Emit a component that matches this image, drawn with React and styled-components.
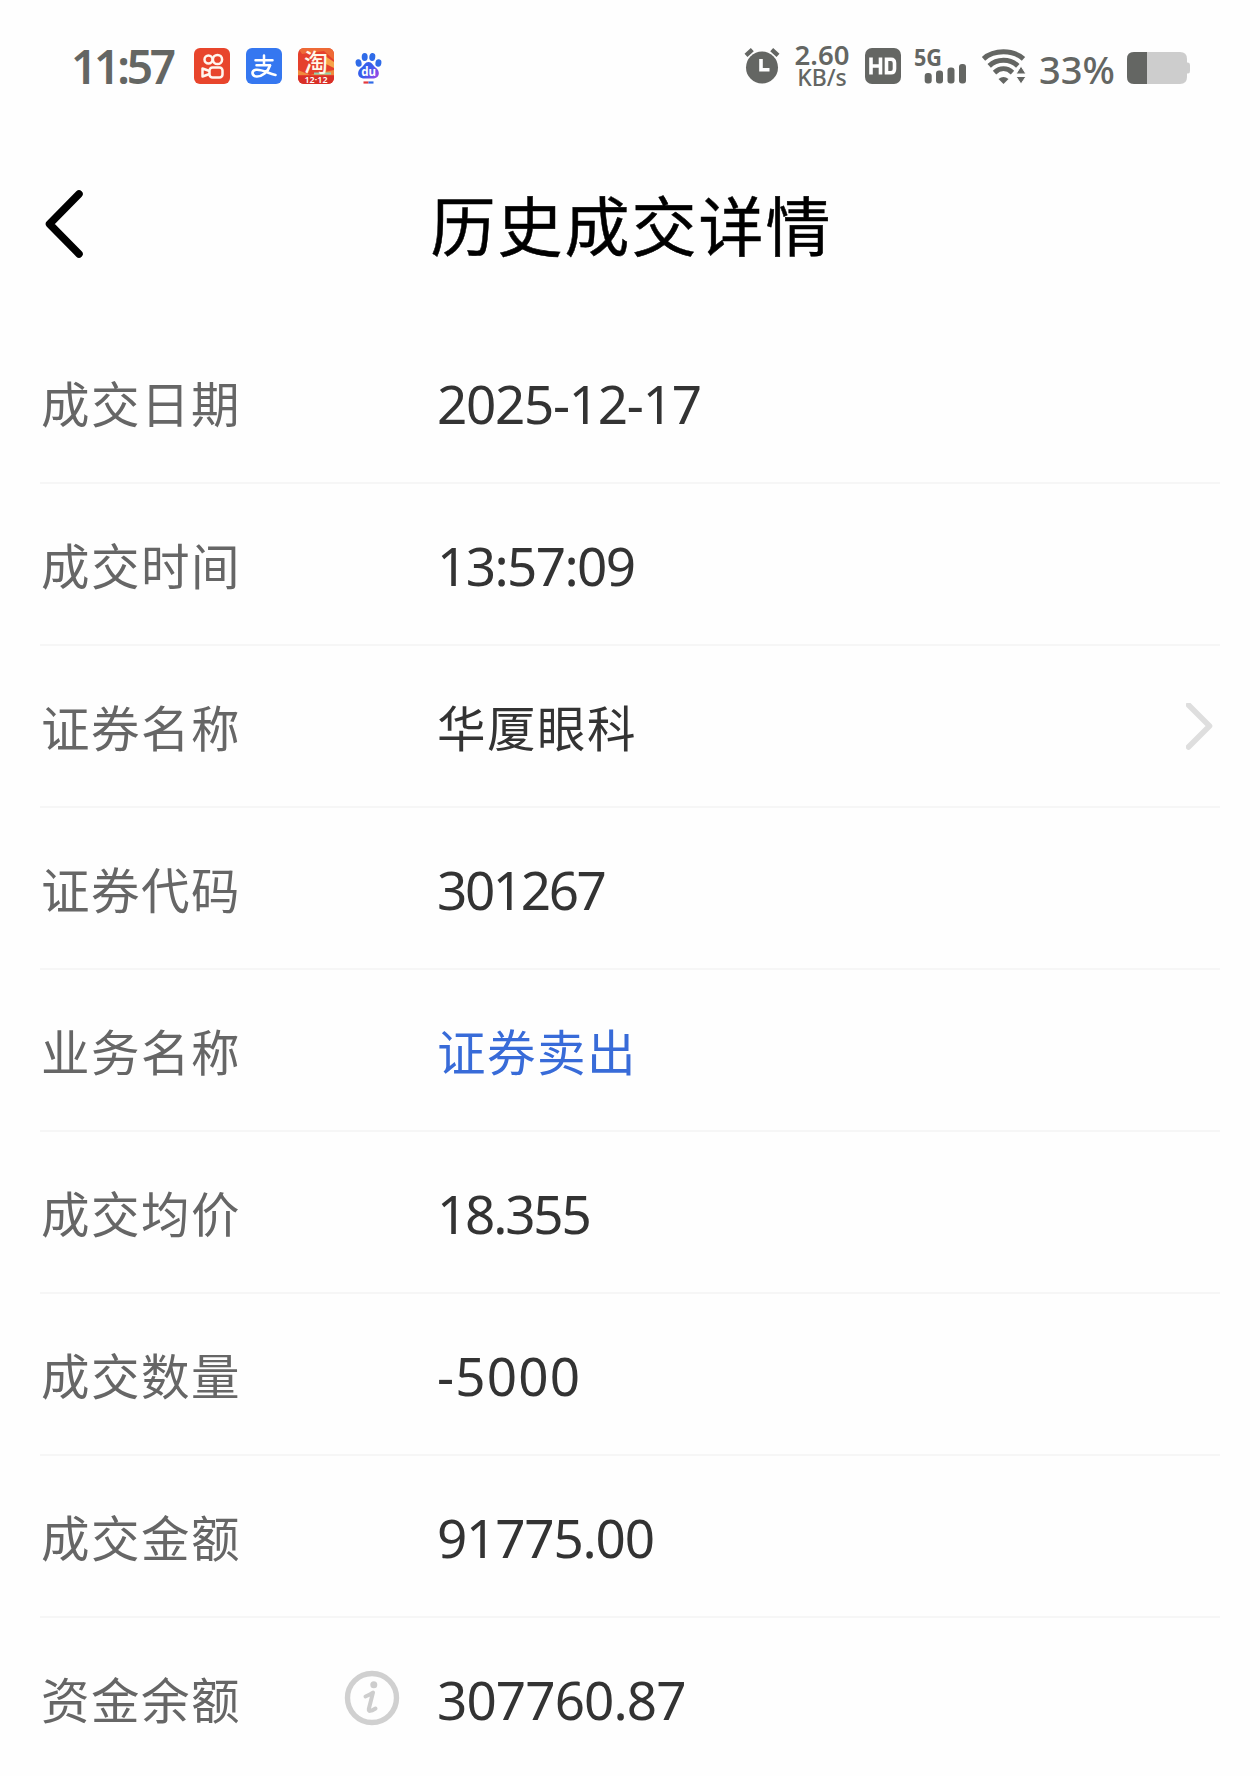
import React from 'react';
import styled, { createGlobalStyle } from 'styled-components';

const GlobalStyle = createGlobalStyle`
  * {
    box-sizing: border-box;
  }

  body {
    margin: 0;
    background-color: #fefefe;
    font-family: 'Noto Sans', 'Noto Sans CJK SC', sans-serif;
  }
`;

const Page = styled.div`
  width: 1260px;
  height: 1776px;
  overflow: hidden;
  background-color: #fefefe;
`;

const StatusBar = styled.div`
  display: flex;
  justify-content: space-between;
  height: 132px;
  padding: 33px 70px 0 71px;
  color: #646663;
`;

const StatusGroup = styled.div`
  display: flex;
  align-items: center;
  height: 66px;
`;

const Clock = styled.span`
  width: 123px;
  font-size: 46px;
  font-weight: 600;
  line-height: 66px;
  letter-spacing: -3.2px;
  white-space: nowrap;
`;

const AppIcon = styled.svg`
  display: block;
  width: 36px;
  height: 36px;
  margin-right: ${(props) => props.$gap || 16}px;
  overflow: visible;
`;

const StatusIcon = styled.svg`
  display: block;
  flex: none;
  margin-left: ${(props) => props.$gap || 0}px;
  overflow: visible;
`;

const Speed = styled.div`
  display: flex;
  flex-direction: column;
  align-items: center;
  width: 56px;
  margin-left: 14px;
  font-weight: 600;
  white-space: nowrap;
`;

const SpeedValue = styled.span`
  font-size: 27.5px;
  line-height: 22px;
`;

const SpeedUnit = styled.span`
  font-size: 23px;
  font-weight: 500;
  line-height: 22px;
`;

const Percent = styled.span`
  width: 76px;
  margin-left: 13px;
  padding-top: 6px;
  font-size: 38px;
  font-weight: 500;
  line-height: 60px;
  white-space: nowrap;
`;

const Header = styled.header`
  display: grid;
  grid-template-columns: 120px 1fr 120px;
  align-items: center;
  height: 190px;
  padding: 0 0 6px;
`;

const BackButton = styled.button`
  display: flex;
  padding: 0 0 0 44px;
  border: none;
  background: none;
`;

const Title = styled.h1`
  margin: 0;
  padding: 0 0 2px 3px;
  font-family: 'Noto Sans CJK SC', sans-serif;
  font-size: 65px;
  font-weight: 400;
  line-height: 90px;
  letter-spacing: 2px;
  text-align: center;
  color: #000;
  -webkit-text-stroke: 0.5px #000;
`;

const List = styled.div`
  padding: 0 40px;
`;

const Row = styled.div`
  display: flex;
  align-items: center;
  height: 162px;
  padding-top: 4px;
  border-bottom: 2px solid #f6f6f6;
`;

const Label = styled.div`
  width: 304px;
  padding: 0 0 4px 1px;
  font-family: 'Noto Sans CJK SC', sans-serif;
  font-size: 48.5px;
  line-height: 70px;
  letter-spacing: 1.5px;
  color: #666;
`;

const InfoSlot = styled.div`
  width: 93px;
`;

const Value = styled.div`
  flex: 1;
  padding-bottom: ${(props) => (props.$chinese ? 4 : 0)}px;
  font-size: ${(props) => (props.$chinese ? 48.5 : 53)}px;
  font-family: ${(props) => (props.$chinese ? "'Noto Sans CJK SC'" : "'Noto Sans'")}, sans-serif;
  line-height: 70px;
  letter-spacing: ${(props) => props.$spacing}px;
  color: ${(props) => (props.$blue ? '#386bd8' : '#333')};
  white-space: nowrap;
`;

const rows = [
  { label: '成交日期', value: '2025-12-17', spacing: -1.3 },
  { label: '成交时间', value: '13:57:09', spacing: -1.6 },
  { label: '证券名称', value: '华厦眼科', spacing: 1.5, chinese: true, arrow: true },
  { label: '证券代码', value: '301267', spacing: -2.4 },
  { label: '业务名称', value: '证券卖出', spacing: 1.5, chinese: true, blue: true },
  { label: '成交均价', value: '18.355', spacing: -2.2 },
  { label: '成交数量', value: '-5000', spacing: 1.2 },
  { label: '成交金额', value: '91775.00', spacing: -1.2 },
  { label: '资金余额', value: '307760.87', spacing: -0.9, info: true },
];

const KuaishouIcon = () => (
  <AppIcon viewBox="0 0 36 36">
    <rect width="36" height="36" rx="6" fill="#e8452c" />
    <g fill="none" stroke="#fff6ee" strokeWidth="2.5">
      <circle cx="14.5" cy="11.5" r="4" />
      <circle cx="23.5" cy="11.5" r="4.6" />
      <rect x="15.5" y="19.5" width="13" height="10" rx="3" />
      <path d="M15.5 23 L8.5 20.5 V28.5 L15.5 26" strokeLinejoin="round" />
    </g>
  </AppIcon>
);

const AlipayIcon = () => (
  <AppIcon viewBox="0 0 36 36">
    <rect width="36" height="36" rx="6" fill="#3577f0" />
    <g fill="none" stroke="#fff" strokeLinecap="round">
      <path d="M9.5 12.3 H26.5 M18 7.5 V17 M10.5 17.3 H24" strokeWidth="2.5" />
      <path
        d="M24 17.5 C22 24 16 28.8 10.5 28.5 C5.5 28 5 22.5 10 21.8 C16 21 22 25.5 29.5 27"
        strokeWidth="2.6"
      />
    </g>
  </AppIcon>
);

const TaobaoIcon = () => (
  <AppIcon viewBox="0 0 36 36" $gap={16}>
    <defs>
      <clipPath id="taobao">
        <rect width="36" height="36" rx="6" />
      </clipPath>
    </defs>
    <g clipPath="url(#taobao)">
      <rect width="36" height="36" fill="#e5402c" />
      <path d="M0 0 H36 V12 L26 3 L4 6 Z" fill="#ee6a36" />
      <path d="M27 8 L36 14 V20 L28 16 Z" fill="#f6a44a" />
      <path d="M0 22 L12 27 L36 22 V27 H0 Z" fill="#f08a3c" />
      <path d="M16 25.5 H33" stroke="#8fd0b0" strokeWidth="2" />
      <rect y="28" width="36" height="8" fill="#d92f27" />
    </g>
    <text x="18" y="22.5" fontSize="24" fontWeight="500" textAnchor="middle" fill="#fff8e8" fontFamily="'Noto Sans CJK SC', sans-serif">淘</text>
    <text x="18" y="35" fontSize="9" fontWeight="600" textAnchor="middle" fill="#fff" fontFamily="'Noto Sans', sans-serif">12·12</text>
  </AppIcon>
);

const BaiduIcon = () => (
  <AppIcon viewBox="0 0 36 36" $gap={1}>
    <defs>
      <linearGradient id="paw" x1="0" y1="0" x2="1" y2="0.6">
        <stop offset="0" stopColor="#2d62ea" />
        <stop offset="0.6" stopColor="#3c5cec" />
        <stop offset="1" stopColor="#8c4be8" />
      </linearGradient>
    </defs>
    <g fill="#2f6be8">
      <ellipse cx="8.6" cy="15" rx="3" ry="3.8" transform="rotate(-12 8.6 15)" />
      <ellipse cx="14.7" cy="9" rx="3" ry="4" />
      <ellipse cx="22.3" cy="9" rx="3" ry="4" transform="rotate(8 22.3 9)" />
      <ellipse cx="28.4" cy="15" rx="3" ry="3.8" transform="rotate(10 28.4 15)" />
    </g>
    <path d="M18.5 14 C22 14 23 17.500 25.500 19.500 C30 22.500 30.500 29.500 24 30.500 H13 C6.500 29.500 7 22.500 11.500 19.500 C14 17.500 15 14 18.500 14 Z" fill="url(#paw)" />
    <text x="18.500" y="27.800" fontSize="11.500" fontWeight="700" textAnchor="middle" fill="#fff" fontFamily="'Noto Sans', sans-serif">du</text>
    <path d="M13.500 34.500 H18.500" stroke="#e4393c" strokeWidth="2.200" />
    <path d="M18.500 34.500 H23.500" stroke="#2f6be8" strokeWidth="2.200" />
  </AppIcon>
);

const AlarmIcon = () => (
  <StatusIcon width="37" height="38" viewBox="-1 0 37 38">
    <circle cx="18" cy="20.500" r="16" fill="#646663" />
    <path d="M2 8.300 L8.300 2.600 M27.700 2.600 L34 8.300" stroke="#646663" strokeWidth="4.400" />
    <path d="M17 12 V22.700 H25.500" fill="none" stroke="#fefefe" strokeWidth="3.600" />
  </StatusIcon>
);

const HdIcon = () => (
  <StatusIcon width="36" height="36" viewBox="0 0 36 36" $gap={15}>
    <rect width="36" height="36" rx="7" fill="#646663" />
    <path
      d="M6 9.500 V26.500 M15.500 9.500 V26.500 M6 18 H15.500 M21.500 11.300 V24.700 H26 Q29.500 24.700 29.500 21 V15 Q29.500 11.300 26 11.300 Z"
      fill="none"
      stroke="#fefefe"
      strokeWidth="3.600"
    />
  </StatusIcon>
);

const SignalIcon = () => (
  <StatusIcon width="54" height="40" viewBox="0 0 54 40" $gap={13}>
    <text x="0" y="20" fontSize="24" fontWeight="700" textLength="28" lengthAdjust="spacingAndGlyphs" fill="#646663" fontFamily="'Noto Sans', sans-serif">5G</text>
    <g fill="#646663">
      <rect x="10.700" y="27" width="7" height="10.500" rx="3" />
      <rect x="22" y="24.500" width="7" height="13" rx="3" />
      <rect x="33.500" y="21.500" width="7" height="16" rx="3" />
      <rect x="45" y="18" width="7" height="19.500" rx="3" />
    </g>
  </StatusIcon>
);

const WifiIcon = () => (
  <StatusIcon width="44" height="36" viewBox="0 0 44 36" $gap={14}>
    <g fill="none" stroke="#646663" strokeWidth="5">
      <path d="M1.500 10.800 C12 1.500 31 1.500 41.500 10.800" />
      <path d="M7.200 17.800 C15 10.500 28 10.500 35.800 17.800" />
      <path d="M12.500 24.600 C18 19.500 25 19.500 30.500 24.600" />
    </g>
    <path d="M16.500 31 Q21.500 27 26.500 31 L21.500 36 Z" fill="#646663" />
    <path d="M39 18 L44 26 H34 Z M34 28.500 H44 L39 36 Z" fill="#646663" stroke="#fefefe" strokeWidth="1" />
  </StatusIcon>
);

const BatteryIcon = () => (
  <StatusIcon width="63" height="35" viewBox="0 -3 63 35" $gap={12}>
    <path d="M7 0 H53 Q60 0 60 7 V10.500 H61 Q63 10.500 63 13 V19 Q63 21.500 61 21.500 H60 V25 Q60 32 53 32 H7 Q0 32 0 25 V7 Q0 0 7 0 Z" fill="#cdcdcd" />
    <path d="M7 0 H20 V32 H7 Q0 32 0 25 V7 Q0 0 7 0 Z" fill="#646663" />
  </StatusIcon>
);

const BackIcon = () => (
  <svg width="40" height="68" viewBox="0 0 40 68">
    <path d="M35 4 L5.500 34 L35 64" fill="none" stroke="#000" strokeWidth="7.500" strokeLinecap="round" strokeLinejoin="round" />
  </svg>
);

const ArrowIcon = () => (
  <svg width="34" height="50" viewBox="0 0 34 50">
    <path d="M2.500 2 L23.500 23 L2.500 44" fill="none" stroke="#dedede" strokeWidth="5.600" strokeLinecap="round" strokeLinejoin="round" overflow="visible" />
  </svg>
);

const InfoIcon = () => (
  <svg width="56" height="56" viewBox="0 0 56 56">
    <circle cx="28" cy="28" r="24.500" fill="none" stroke="#d0d0d0" strokeWidth="5.400" />
    <circle cx="29.800" cy="14.800" r="3.500" fill="#cdcdcd" />
    <path d="M21.500 26.500 Q26.500 24.500 29 22.500 L24.800 39 Q24.300 43 31.500 38.500" fill="none" stroke="#cdcdcd" strokeWidth="4" strokeLinecap="round" strokeLinejoin="round" />
  </svg>
);

const App = () => {
  return (
    <>
      <GlobalStyle />
      <Page>
        <StatusBar>
          <StatusGroup>
            <Clock>11:57</Clock>
            <KuaishouIcon />
            <AlipayIcon />
            <TaobaoIcon />
            <BaiduIcon />
          </StatusGroup>
          <StatusGroup>
            <AlarmIcon />
            <Speed>
              <SpeedValue>2.60</SpeedValue>
              <SpeedUnit>KB/s</SpeedUnit>
            </Speed>
            <HdIcon />
            <SignalIcon />
            <WifiIcon />
            <Percent>33%</Percent>
            <BatteryIcon />
          </StatusGroup>
        </StatusBar>
        <Header>
          <BackButton aria-label="返回">
            <BackIcon />
          </BackButton>
          <Title>历史成交详情</Title>
        </Header>
        <List>
          {rows.map((item) => (
            <Row key={item.label}>
              <Label>{item.label}</Label>
              <InfoSlot>{item.info && <InfoIcon />}</InfoSlot>
              <Value $chinese={item.chinese} $blue={item.blue} $spacing={item.spacing}>
                {item.value}
              </Value>
              {item.arrow && <ArrowIcon />}
            </Row>
          ))}
        </List>
      </Page>
    </>
  );
};

export default App;
